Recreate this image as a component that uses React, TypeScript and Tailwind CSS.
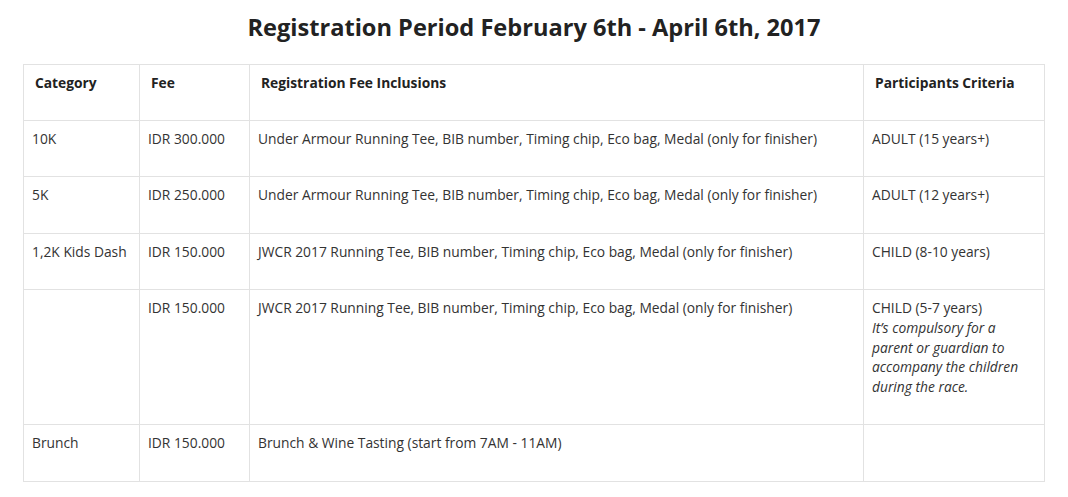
export default function App() {
    const rows = [
        { category: "10K", fee: "IDR 300.000", inclusions: "Under Armour Running Tee, BIB number, Timing chip, Eco bag, Medal (only for finisher)", criteria: "ADULT (15 years+)" },
        { category: "5K", fee: "IDR 250.000", inclusions: "Under Armour Running Tee, BIB number, Timing chip, Eco bag, Medal (only for finisher)", criteria: "ADULT (12 years+)" },
        { category: "1,2K Kids Dash", fee: "IDR 150.000", inclusions: "JWCR 2017 Running Tee, BIB number, Timing chip, Eco bag, Medal (only for finisher)", criteria: "CHILD (8-10 years)" },
        { category: "", fee: "IDR 150.000", inclusions: "JWCR 2017 Running Tee, BIB number, Timing chip, Eco bag, Medal (only for finisher)", criteria: "CHILD (5-7 years)", note: "It’s compulsory for a parent or guardian to accompany the children during the race." },
        { category: "Brunch", fee: "IDR 150.000", inclusions: "Brunch & Wine Tasting (start from 7AM - 11AM)", criteria: "" },
    ];

    const cell = "border border-[#e2e2e2] align-top pl-2 pr-3 pt-[8px] pb-[28px]";
    const head = "border border-[#e2e2e2] align-top pl-[11px] pr-3 pt-[8px] pb-[27px] text-left font-bold text-[#222]";

    return (
        <div className="min-h-screen bg-white text-[#333] font-['Open_Sans',sans-serif] text-[13.8px] leading-[19.6px]">
            <h2 className="text-center text-[23.6px] font-bold text-[#222] leading-[32px] pt-[11px] pb-[21px]">
                Registration Period February 6th - April 6th, 2017
            </h2>

            <table className="ml-[23px] w-[1021px] table-fixed border-collapse">
                <colgroup>
                    <col className="w-[116px]" />
                    <col className="w-[110px]" />
                    <col className="w-[614px]" />
                    <col className="w-[181px]" />
                </colgroup>
                <thead>
                    <tr>
                        <th className={head}>Category</th>
                        <th className={head}>Fee</th>
                        <th className={head}>Registration Fee Inclusions</th>
                        <th className={head}>Participants Criteria</th>
                    </tr>
                </thead>
                <tbody>
                    {rows.map((row, i) => (
                        <tr key={i}>
                            <td className={cell}>{row.category}</td>
                            <td className={cell}>{row.fee}</td>
                            <td className={cell}>{row.inclusions}</td>
                            <td className={cell}>
                                {row.criteria}
                                {row.note && <em className="block italic">{row.note}</em>}
                            </td>
                        </tr>
                    ))}
                </tbody>
            </table>
        </div>
    );
}
